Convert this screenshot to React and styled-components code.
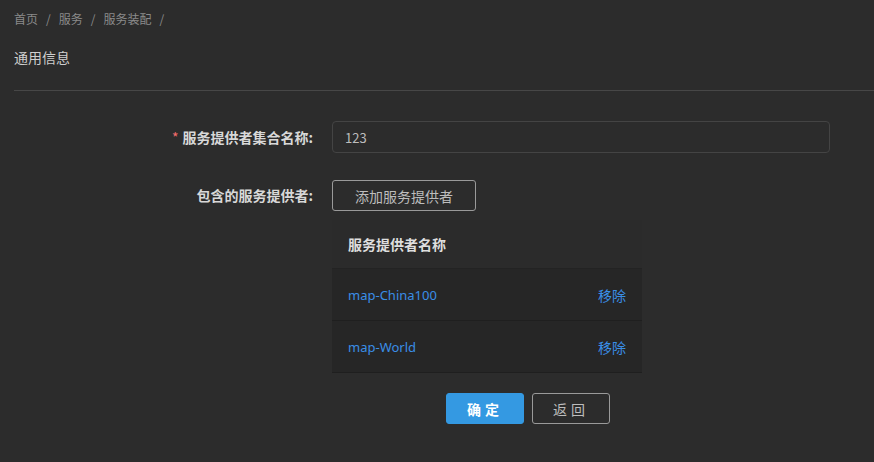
import styled, { createGlobalStyle } from 'styled-components';

const GlobalStyle = createGlobalStyle`
  html, body {
    margin: 0;
    padding: 0;
    background: #2c2c2c;
  }
  body {
    font-family: "Noto Sans CJK SC", "Noto Sans", sans-serif;
    height: 462px;
    overflow: hidden;
  }
`;

const Page = styled.div`
  padding: 8px 0 0 14px;
`;

const Breadcrumb = styled.div`
  display: flex;
  align-items: center;
  height: 20px;
  font-size: 12px;
  color: #8a8a8a;
`;

const Crumb = styled.span`
  color: #8a8a8a;
`;

const Sep = styled.span`
  margin: 0 8px;
  color: #8a8a8a;
`;

const SectionTitle = styled.div`
  font-size: 14px;
  color: #cfcfcf;
  height: 20px;
  line-height: 20px;
  margin-top: 19px;
`;

const Divider = styled.div`
  height: 1px;
  background: #474747;
  margin-top: 23px;
`;

const Form = styled.div`
  display: flex;
  flex-direction: column;
  padding-top: 30px;
  padding-right: 44px;
`;

const Row = styled.div`
  display: flex;
  align-items: ${p => (p.$top ? 'flex-start' : 'center')};
  margin-bottom: ${p => p.$gap || 0}px;
`;

const Label = styled.label`
  width: 318px;
  flex: none;
  box-sizing: border-box;
  padding-right: 19px;
  text-align: right;
  font-size: 14px;
  font-weight: 700;
  color: #d8d8d8;
  line-height: ${p => p.$lh || 32}px;
`;

const Star = styled.span`
  color: #f56c6c;
  margin-right: 4px;
  font-weight: 400;
`;

const Field = styled.div`
  flex: 1;
  display: flex;
  flex-direction: column;
  align-items: flex-start;
`;

const Input = styled.input`
  width: 100%;
  height: 32px;
  box-sizing: border-box;
  background: #2c2c2c;
  border: 1px solid #444;
  border-radius: 4px;
  padding: 0 12px;
  color: #bdbdbd;
  font-size: 13px;
  font-family: inherit;
  outline: none;
`;

const Button = styled.button`
  height: 31px;
  box-sizing: border-box;
  padding: 0 ${p => p.$px || 20}px;
  border-radius: 3px;
  font-family: inherit;
  font-size: 14px;
  letter-spacing: ${p => p.$ls || 0}px;
  cursor: pointer;
  border: 1px solid ${p => (p.$primary ? '#3499e2' : '#9a9a9a')};
  background: ${p => (p.$primary ? '#3499e2' : 'transparent')};
  color: ${p => (p.$primary ? '#ffffff' : '#bdbdbd')};
  font-weight: ${p => (p.$primary ? 700 : 400)};
`;

const Table = styled.div`
  width: 310px;
  margin-top: 9px;
`;

const HeadRow = styled.div`
  height: 48px;
  display: flex;
  align-items: center;
  padding: 0 16px;
  font-size: 14px;
  font-weight: 700;
  color: #dedede;
  background: #2b2b2b;
  border-bottom: 1px solid #232323;
`;

const BodyRow = styled.div`
  height: 51px;
  display: flex;
  align-items: center;
  justify-content: space-between;
  padding: 0 16px;
  background: #262626;
  border-bottom: 1px solid #1f1f1f;
  font-size: 13px;
`;

const Link = styled.span`
  color: #3a8ee6;
  font-family: "Noto Sans", "Noto Sans CJK SC", sans-serif;
`;

const Action = styled.span`
  color: #3a8ee6;
  font-size: 14px;
`;

const Actions = styled.div`
  display: flex;
  gap: 8px;
  margin-left: 114px;
  margin-top: 20px;
`;

const providers = ['map-China100', 'map-World'];

export default function App() {
  return (
    <>
      <GlobalStyle />
      <Page>
        <Breadcrumb>
          <Crumb>首页</Crumb>
          <Sep>/</Sep>
          <Crumb>服务</Crumb>
          <Sep>/</Sep>
          <Crumb>服务装配</Crumb>
          <Sep>/</Sep>
        </Breadcrumb>
        <SectionTitle>通用信息</SectionTitle>
        <Divider />
        <Form>
          <Row $gap={27}>
            <Label>
              <Star>*</Star>服务提供者集合名称:
            </Label>
            <Field>
              <Input defaultValue="123" />
            </Field>
          </Row>
          <Row $top>
            <Label $lh={31}>包含的服务提供者:</Label>
            <Field>
              <Button $px={22}>添加服务提供者</Button>
              <Table>
                <HeadRow>服务提供者名称</HeadRow>
                {providers.map(name => (
                  <BodyRow key={name}>
                    <Link>{name}</Link>
                    <Action>移除</Action>
                  </BodyRow>
                ))}
              </Table>
              <Actions>
                <Button $primary $px={20} $ls={4}>确定</Button>
                <Button $px={20} $ls={4}>返回</Button>
              </Actions>
            </Field>
          </Row>
        </Form>
      </Page>
    </>
  );
}
